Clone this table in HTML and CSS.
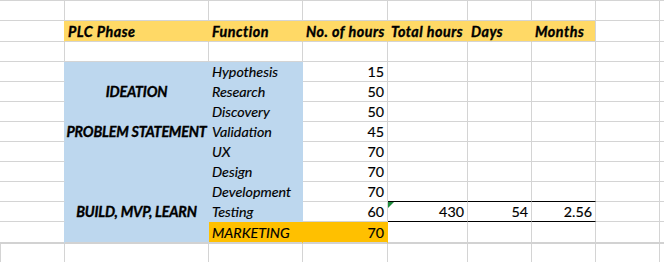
FILE: index.html
```html
<!DOCTYPE html>
<html>
<head>
<meta charset="utf-8">
<link rel="stylesheet" href="styles.css">
</head>
<body>
<div class="sheet">
  <div class="row">
    <div class="c"></div><div class="c"></div><div class="c"></div><div class="c"></div><div class="c"></div><div class="c"></div><div class="c"></div><div class="c"></div><div class="c"></div>
  </div>
  <div class="row hdr">
    <div class="c ry"></div>
    <div class="c y">PLC Phase</div>
    <div class="c y">Function</div>
    <div class="c y">No. of hours</div>
    <div class="c y">Total hours</div>
    <div class="c y">Days</div>
    <div class="c y yend">Months</div>
    <div class="c"></div><div class="c"></div>
  </div>
  <div class="row">
    <div class="c"></div><div class="c"></div><div class="c"></div><div class="c"></div><div class="c"></div><div class="c"></div><div class="c"></div><div class="c"></div><div class="c"></div>
  </div>
  <div class="row">
    <div class="c rb"></div><div class="c b"></div><div class="c b fn">Hypothesis</div><div class="c num">15</div>
    <div class="c"></div><div class="c"></div><div class="c"></div><div class="c"></div><div class="c"></div>
  </div>
  <div class="row">
    <div class="c rb"></div><div class="c b phase">IDEATION</div><div class="c b fn">Research</div><div class="c num">50</div>
    <div class="c"></div><div class="c"></div><div class="c"></div><div class="c"></div><div class="c"></div>
  </div>
  <div class="row">
    <div class="c rb"></div><div class="c b"></div><div class="c b fn">Discovery</div><div class="c num">50</div>
    <div class="c"></div><div class="c"></div><div class="c"></div><div class="c"></div><div class="c"></div>
  </div>
  <div class="row">
    <div class="c rb"></div><div class="c b phase">PROBLEM STATEMENT</div><div class="c b fn">Validation</div><div class="c num">45</div>
    <div class="c"></div><div class="c"></div><div class="c"></div><div class="c"></div><div class="c"></div>
  </div>
  <div class="row">
    <div class="c rb"></div><div class="c b"></div><div class="c b fn">UX</div><div class="c num">70</div>
    <div class="c"></div><div class="c"></div><div class="c"></div><div class="c"></div><div class="c"></div>
  </div>
  <div class="row">
    <div class="c rb"></div><div class="c b"></div><div class="c b fn">Design</div><div class="c num">70</div>
    <div class="c"></div><div class="c"></div><div class="c"></div><div class="c"></div><div class="c"></div>
  </div>
  <div class="row">
    <div class="c rb"></div><div class="c b"></div><div class="c b fn">Development</div><div class="c num">70</div>
    <div class="c kb"></div><div class="c kb"></div><div class="c kb"></div><div class="c"></div><div class="c"></div>
  </div>
  <div class="row">
    <div class="c rb"></div><div class="c b phase">BUILD, MVP, LEARN</div><div class="c b fn">Testing</div><div class="c num">60</div>
    <div class="c num kb tri">430</div><div class="c num kb">54</div><div class="c num kb">2.56</div><div class="c"></div><div class="c"></div>
  </div>
  <div class="row last">
    <div class="c rb"></div><div class="c b"></div><div class="c o fn">MARKETING</div><div class="c o num">70</div>
    <div class="c"></div><div class="c"></div><div class="c"></div><div class="c"></div><div class="c"></div>
  </div>
  <div class="row">
    <div class="c first"></div><div class="c"></div><div class="c"></div><div class="c"></div><div class="c"></div><div class="c"></div><div class="c"></div><div class="c"></div><div class="c"></div>
  </div>
</div>
</body>
</html>
```

FILE: styles.css
```css
html, body {
  margin: 0;
  padding: 0;
  background: #ffffff;
}

.sheet {
  width: 664px;
  overflow: hidden;
  border-top: 1px solid #d4d4d4;
  font-family: Lato, "Liberation Sans", sans-serif;
  font-size: 14.3px;
  color: #000;
  -webkit-text-stroke: 0.15px #000;
}

.row {
  display: grid;
  grid-template-columns: 65px 144px 94px 85px 80px 64px 64px 64px 4px;
  height: 20px;
}

.row.hdr {
  height: 21px;
}

.row.last {
  height: 22px;
}

.c {
  box-sizing: border-box;
  border-right: 1px solid #d4d4d4;
  border-bottom: 1px solid #d4d4d4;
  display: flex;
  align-items: flex-end;
  padding: 0 3px 2px 3px;
  line-height: 15px;
  white-space: nowrap;
  position: relative;
}

.row.last .c {
  border-bottom: 2px solid #d2d2d2;
}

.c.first {
  border-left: 1px solid #d4d4d4;
}

.hdr .c.y {
  background: #ffd966;
  border-right-color: #ffd966;
  font-weight: 700;
  font-style: italic;
  letter-spacing: 0.5px;
  padding-left: 3px;
  -webkit-text-stroke: 0.35px #000;
}

.hdr .c.yend {
  border-right-color: #d4d4d4;
}

.c.ry {
  border-right-color: #ffd966;
}

.c.rb {
  border-right-color: #bdd7ee;
}

.c.b {
  background: #bdd7ee;
  border-right-color: #bdd7ee;
  border-bottom-color: #bdd7ee;
}

.c.o {
  background: #ffc000;
  border-right-color: #ffc000;
}

.c.fn {
  font-style: italic;
}

.c.phase {
  justify-content: center;
  font-weight: 700;
  font-style: italic;
  letter-spacing: -0.2px;
  -webkit-text-stroke: 0.35px #000;
}

.c.num {
  justify-content: flex-end;
}

.c.kb {
  border-bottom-color: #000;
}

.c.tri::before {
  content: "";
  position: absolute;
  left: 0;
  top: 0;
  width: 0;
  height: 0;
  border-top: 6px solid #1e8a3c;
  border-right: 6px solid transparent;
}
```
